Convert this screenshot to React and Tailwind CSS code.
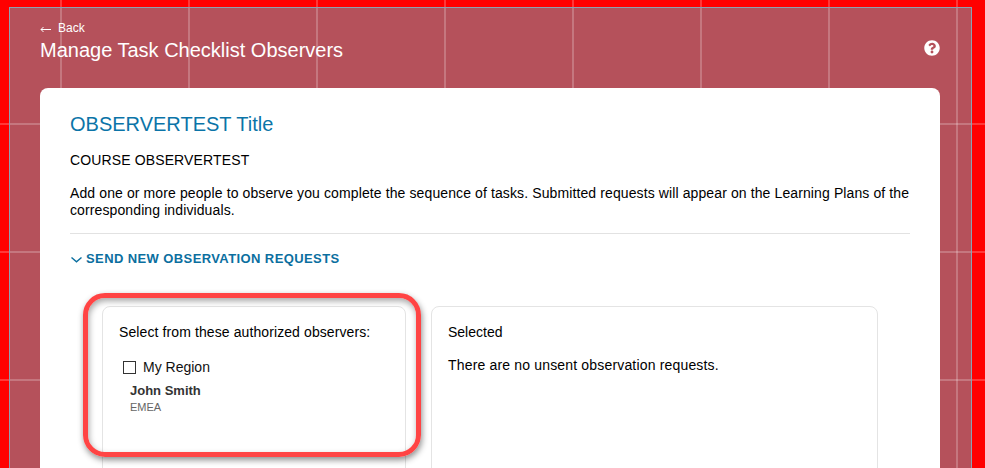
import React from "react";
import { FaQuestionCircle } from "react-icons/fa";

export default function App() {
  return (
    <div className="relative h-[468px] w-[985px] overflow-hidden bg-[#ff0000] bg-[linear-gradient(to_right,rgba(255,255,255,0.22)_2px,transparent_2px),linear-gradient(to_bottom,rgba(255,255,255,0.22)_2px,transparent_2px)] bg-[size:128px_128px] bg-[position:60px_123px] pl-[9px] pr-[13px] pt-[7px] font-['Liberation_Sans',Arial,sans-serif]">
      <div className="h-[600px] border border-[#8fa0b0] border-b-0 bg-[#b5515b] bg-[linear-gradient(to_right,rgba(255,255,255,0.22)_2px,transparent_2px),linear-gradient(to_bottom,rgba(255,255,255,0.22)_2px,transparent_2px)] bg-[size:128px_128px] bg-[position:50px_115px] pl-[30px] pr-[31px]">
        <div className="flex h-[80px] items-start justify-between">
          <div>
            <div className="mt-[13px] flex h-[14px] items-center text-[12px] leading-[14px] text-white">
              <svg width="11" height="7" viewBox="0 0 11 7" className="mr-[7px] mt-[2px]" fill="none" stroke="white" strokeWidth="1">
                <path d="M11 3.5H1M3.5 1L1 3.5L3.5 6" />
              </svg>
              Back
            </div>
            <h1 className="mt-[2px] text-[20px] leading-[26px] font-normal text-white">Manage Task Checklist Observers</h1>
          </div>
          <FaQuestionCircle className="mt-[32px] text-white" size={16} />
        </div>
        <div className="rounded-[8px] bg-white px-[30px] pt-[23px]">
          <h2 className="text-[20px] leading-[26px] font-normal text-[#0b74a8]">OBSERVERTEST Title</h2>
          <p className="mt-[15px] text-[14px] leading-[17px] tracking-[0.13px] text-black">COURSE OBSERVERTEST</p>
          <p className="mt-[16px] text-[14px] leading-[17px] tracking-[0.11px] text-black">
            Add one or more people to observe you complete the sequence of tasks. Submitted requests will appear on the Learning Plans of the corresponding individuals.
          </p>
          <div className="mt-[14px] h-px bg-[#e2e2e2]" />
          <div className="mt-[18px] flex h-[14px] items-center text-[13px] leading-[14px] font-bold tracking-[0.4px] text-[#0b6f9f]">
            <svg width="11" height="6" viewBox="0 0 11 6" className="ml-px mr-[4px] mt-[2px]" fill="none" stroke="#0b6f9f" strokeWidth="1.4">
              <path d="M0.5 0.5L5.5 4.8L10.5 0.5" />
            </svg>
            SEND NEW OBSERVATION REQUESTS
          </div>
          <div className="ml-[32px] mt-[40px] flex gap-[25px]">
            <div className="h-[200px] w-[304px] rounded-[8px] border border-[#e4e4e4] pl-[16px] pt-[17px]">
              <p className="text-[14px] leading-[17px] tracking-[0.1px] text-black">Select from these authorized observers:</p>
              <label className="ml-[4px] mt-[18px] flex items-center">
                <span className="h-[13px] w-[13px] border border-[#333333]" />
                <span className="ml-[7px] text-[14px] leading-[17px] text-[#111111]">My Region</span>
              </label>
              <p className="ml-[11px] mt-[7px] text-[13px] leading-[15px] font-bold text-[#333333]">John Smith</p>
              <p className="ml-[11px] mt-[2px] text-[11px] leading-[14px] text-[#666666]">EMEA</p>
            </div>
            <div className="h-[200px] w-[447px] rounded-[8px] border border-[#e4e4e4] pl-[16px] pt-[17px]">
              <p className="text-[14px] leading-[17px] text-black">Selected</p>
              <p className="mt-[16px] text-[14px] leading-[17px] tracking-[0.17px] text-black">There are no unsent observation requests.</p>
            </div>
          </div>
        </div>
      </div>
      <div className="absolute left-[83px] top-[293px] h-[164px] w-[338px] rounded-[22px] border-[5px] border-[#ff4444] shadow-[1px_3px_6px_rgba(0,0,0,0.45),inset_1px_3px_6px_rgba(0,0,0,0.35)]" />
    </div>
  );
}
